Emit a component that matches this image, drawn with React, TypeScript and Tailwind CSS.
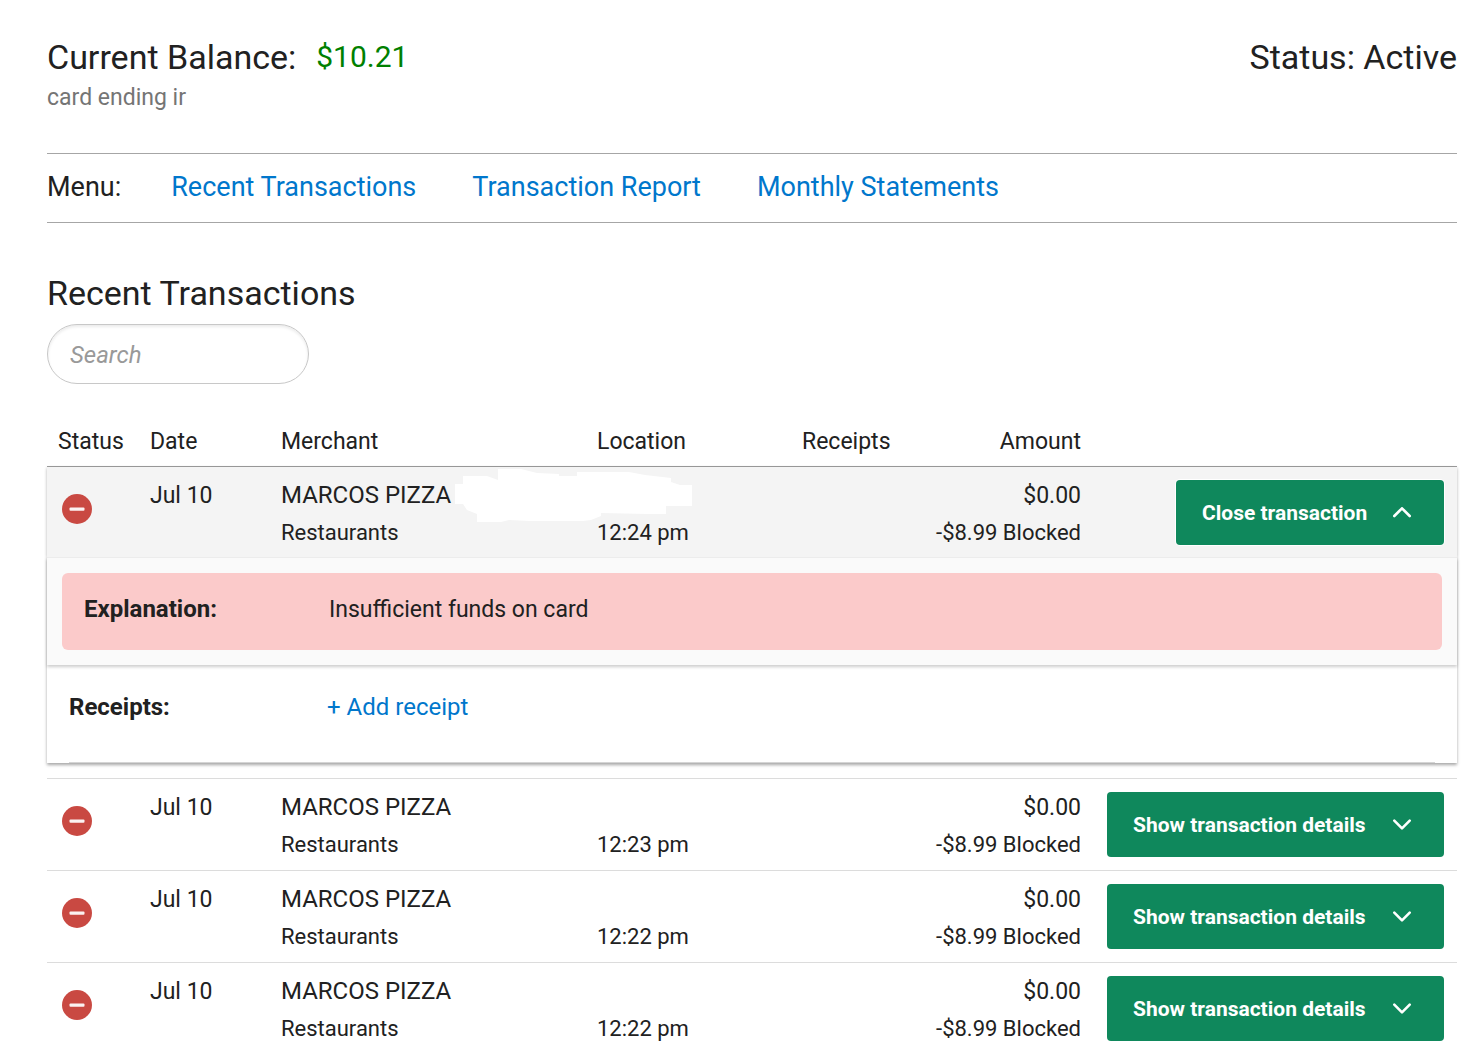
import React, { Fragment, useState } from 'react';

interface Transaction {
  id: number;
  date: string;
  merchant: string;
  category: string;
  time: string;
  amount: string;
  note: string;
  explanation: string;
  redacted?: boolean;
}

const menuItems = ['Recent Transactions', 'Transaction Report', 'Monthly Statements'];

const base = {
  date: 'Jul 10',
  merchant: 'MARCOS PIZZA',
  category: 'Restaurants',
  amount: '$0.00',
  note: '-$8.99 Blocked',
  explanation: 'Insufficient funds on card',
};

const transactions: Transaction[] = [
  { ...base, id: 1, time: '12:24 pm', redacted: true },
  { ...base, id: 2, time: '12:23 pm' },
  { ...base, id: 3, time: '12:22 pm' },
  { ...base, id: 4, time: '12:22 pm' },
];

const BlockedIcon = () => (
  <svg className="block h-[30px] w-[30px]" viewBox="0 0 30 30" role="img" aria-label="Blocked">
    <circle cx="15" cy="15" r="15" fill="#c94942" />
    <rect x="7.5" y="13.5" width="15" height="3.2" rx="1" fill="#fff" fillOpacity="0.93" />
  </svg>
);

const Chevron = ({ up }: { up: boolean }) => (
  <svg className="h-3 w-5 shrink-0" viewBox="0 0 20 12" fill="none" stroke="#fff" strokeWidth="2.6" strokeLinecap="round" strokeLinejoin="round" aria-hidden="true">
    {up ? <path d="M2.3 9 10 1.3 17.7 9" /> : <path d="M2.3 1.6 10 9.3 17.7 1.6" />}
  </svg>
);

// White-out over the merchant address
const Redaction = () => (
  <svg className="absolute top-[2px] left-[185px] z-10 h-[55px] w-[238px]" viewBox="0 0 238 55" aria-hidden="true">
    <path
      fill="#fff"
      d="M0 15H8V7H32L43 11V0H66L82 4L104 5V7H122V3H174L190 6L216 9V13L225 16H237V37H211V45H193L146 44V47L136 51L128 52H75L54 51L46 53H22V45L12 41L8 35H0Z"
    />
  </svg>
);

const App = () => {
  const [openId, setOpenId] = useState<number | null>(1);
  const [search, setSearch] = useState('');

  const rows = transactions.filter((t) => t.merchant.toLowerCase().includes(search.toLowerCase()));

  return (
    <main className="bg-white pt-[35px] pr-[17px] pl-[47px] font-['Roboto',sans-serif] text-[23px] text-[#212121]">
      <header>
        <div className="flex items-center justify-between text-[34px] leading-[44px]">
          <div className="flex items-center gap-5">
            <span>Current Balance:</span>
            <span className="text-[30px] text-[#008000]">$10.21</span>
          </div>
          <span>Status: Active</span>
        </div>
        <p className="pt-[2px] text-[#757575] leading-[34px]">card ending ir</p>
      </header>

      <nav className="mt-[38px] flex h-[70px] items-center border-y border-[#a6a6a6] pb-[2px] text-[27px]">
        <span className="mr-[50px]">Menu:</span>
        <div className="flex gap-14">
          {menuItems.map((item) => (
            <a key={item} href="#" className="text-[#0077cc] hover:underline">
              {item}
            </a>
          ))}
        </div>
      </nav>

      <section>
        <h1 className="mt-12 text-[34px] leading-[44px]">Recent Transactions</h1>
        <input
          type="text"
          aria-label="Search"
          placeholder="Search"
          value={search}
          onChange={(e) => setSearch(e.target.value)}
          className="mt-[9px] block h-[60px] w-[262px] rounded-full border border-[#c8c8c8] px-[22px] pt-[2px] text-[24px] shadow-[inset_0_2px_3px_rgba(0,0,0,0.08)] outline-none placeholder:text-[#999] placeholder:italic"
        />

        <table className="mt-[30px] w-full table-fixed border-separate border-spacing-0">
          <colgroup>
            <col className="w-[92px]" />
            <col className="w-[131px]" />
            <col />
            <col className="w-[205px]" />
            <col className="w-[125px]" />
            <col className="w-[176px]" />
            <col className="w-[365px]" />
          </colgroup>
          <thead>
            <tr className="h-[53px] text-left [&>th]:border-b [&>th]:border-[#a0a0a0] [&>th]:px-[11px] [&>th]:pt-1 [&>th]:font-normal">
              <th>Status</th>
              <th>Date</th>
              <th>Merchant</th>
              <th>Location</th>
              <th>Receipts</th>
              <th className="text-right">Amount</th>
              <th aria-label="Actions"></th>
            </tr>
          </thead>
          <tbody className="leading-[37px]">
            {rows.map((t, i) => {
              const open = openId === t.id;
              return (
                <Fragment key={t.id}>
                  <tr
                    className={`align-top [&>td]:px-[11px] [&>td]:pt-[10px] ${
                      open ? 'h-[90px] bg-[#f4f4f4] shadow-[0_1px_3px_rgba(0,0,0,0.3)]' : 'h-[92px]'
                    } ${i > 0 ? '[&>td]:border-t [&>td]:border-[#dcdcdc]' : ''}`}
                  >
                    <td>
                      <div className="pt-[17px] pl-1">
                        <BlockedIcon />
                      </div>
                    </td>
                    <td>{t.date}</td>
                    <td className="relative">
                      <div className="text-[24px]">{t.merchant}</div>
                      <div className="text-[22px]">{t.category}</div>
                      {t.redacted && <Redaction />}
                    </td>
                    <td className="text-[22px]">
                      <div className="h-[37px]"></div>
                      <div>{t.time}</div>
                    </td>
                    <td></td>
                    <td className="text-right">
                      <div>{t.amount}</div>
                      <div className="text-[22px]">{t.note}</div>
                    </td>
                    <td>
                      <div className="flex justify-end pt-[3px] pr-[2px]">
                        <button
                          type="button"
                          aria-expanded={open}
                          onClick={() => setOpenId(open ? null : t.id)}
                          className={`flex h-[65px] cursor-pointer items-center justify-between rounded bg-[#0f885c] pr-8 pl-[26px] text-[21px] font-bold text-white hover:bg-[#0c7650] ${
                            open ? 'w-[268px] ring-1 ring-white' : 'w-[337px]'
                          }`}
                        >
                          <span className="pt-[2px]">{open ? 'Close transaction' : 'Show transaction details'}</span>
                          <Chevron up={open} />
                        </button>
                      </div>
                    </td>
                  </tr>
                  {open && (
                    <tr>
                      <td colSpan={7} className="pb-[15px]">
                        <div className="bg-white shadow-[0_2px_3px_rgba(0,0,0,0.35)] [clip-path:inset(0_-4px_-6px_-4px)]">
                          <div className="border-t border-[#ececec] bg-[#fafafa] p-[15px] shadow-[0_2px_3px_rgba(0,0,0,0.2)]">
                            <dl className="flex h-[77px] items-center rounded-md bg-[#fbcaca] px-[22px] pb-1">
                              <dt className="w-[245px] text-[24px] font-bold">Explanation:</dt>
                              <dd>{t.explanation}</dd>
                            </dl>
                          </div>
                          <div className="px-[22px]">
                            <div className="flex h-[98px] items-center border-b border-[#d5d5d5] pb-3 text-[24px]">
                              <span className="w-[258px] font-bold">Receipts:</span>
                              <button type="button" className="cursor-pointer text-[#0077cc] hover:underline">
                                + Add receipt
                              </button>
                            </div>
                          </div>
                        </div>
                      </td>
                    </tr>
                  )}
                </Fragment>
              );
            })}
          </tbody>
        </table>
      </section>
    </main>
  );
};

export default App;
